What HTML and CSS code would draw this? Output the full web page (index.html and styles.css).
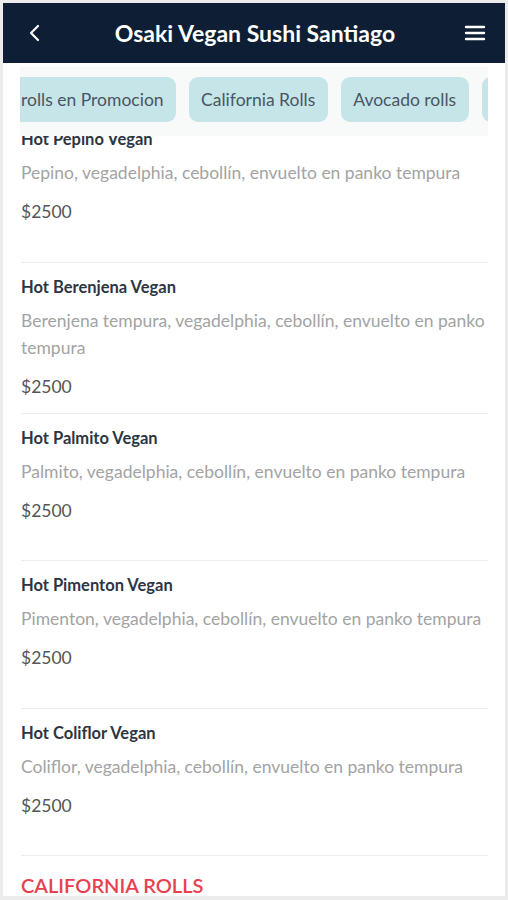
FILE: index.html
```html
<!DOCTYPE html>
<html lang="es">
<head>
  <meta charset="UTF-8" />
  <meta name="viewport" content="width=device-width, initial-scale=1" />
  <title>Osaki Vegan Sushi Santiago</title>
  <link rel="stylesheet" href="styles.css">
</head>

<body>
  <div class="app">
    <header class="topbar">
      <span class="topbar-btn">
        <svg width="20" height="20" viewBox="0 0 20 20"><path d="M13 3 L6 10 L13 17" fill="none" stroke="#fff" stroke-width="2.2" stroke-linecap="round" stroke-linejoin="round"/></svg>
      </span>
      <h1>Osaki Vegan Sushi Santiago</h1>
      <span class="topbar-btn">
        <svg width="22" height="18" viewBox="0 0 22 18"><path d="M2 3 H20 M2 9 H20 M2 15 H20" fill="none" stroke="#fff" stroke-width="2.4" stroke-linecap="round"/></svg>
      </span>
    </header>

    <main class="menu">
      <!-- barra de categorias (fija sobre la lista) -->
      <nav class="categories">
        <div class="chips">
          <span class="chip chip-cut">rolls en Promocion</span>
          <span class="chip">California Rolls</span>
          <span class="chip">Avocado rolls</span>
          <span class="chip chip-empty"></span>
        </div>
      </nav>

      <ul class="products">
        <li class="product">
          <h3>Hot Pepino Vegan</h3>
          <p class="desc">Pepino, vegadelphia, cebollín, envuelto en panko tempura</p>
          <p class="price">$2500</p>
        </li>
        <li class="product">
          <h3>Hot Berenjena Vegan</h3>
          <p class="desc">Berenjena tempura, vegadelphia, cebollín, envuelto en panko tempura</p>
          <p class="price">$2500</p>
        </li>
        <li class="product">
          <h3>Hot Palmito Vegan</h3>
          <p class="desc">Palmito, vegadelphia, cebollín, envuelto en panko tempura</p>
          <p class="price">$2500</p>
        </li>
        <li class="product">
          <h3>Hot Pimenton Vegan</h3>
          <p class="desc">Pimenton, vegadelphia, cebollín, envuelto en panko tempura</p>
          <p class="price">$2500</p>
        </li>
        <li class="product">
          <h3>Hot Coliflor Vegan</h3>
          <p class="desc">Coliflor, vegadelphia, cebollín, envuelto en panko tempura</p>
          <p class="price">$2500</p>
        </li>
      </ul>

      <h2 class="section-title">California Rolls</h2>
    </main>
  </div>
</body>
</html>
```

FILE: styles.css
```css
html, body {
  height: 100%;
}

body {
  margin: 0;
  background-color: #ececec;
  font-family: Lato, "Open Sans", sans-serif;
  padding: 3px 3px 4px 3px;
  box-sizing: border-box;
  overflow: hidden;
}

.app {
  background: #fff;
  height: 100%;
  overflow: hidden;
}

.topbar {
  height: 60px;
  background-color: #0e1f35;
  display: flex;
  align-items: center;
  justify-content: space-between;
  padding: 0 18px 0 20px;
}

.topbar h1 {
  margin: 0;
  color: #fff;
  font-size: 23px;
  font-weight: bold;
}

.topbar-btn {
  display: flex;
  width: 24px;
  justify-content: center;
}

.menu {
  position: relative;
  padding: 52px 17px 0 18px;
}

.categories {
  position: absolute;
  top: 4px;
  left: 17px;
  right: 17px;
  background: #f8f9f9;
  padding: 10px 0 14px 0;
  overflow: hidden;
  z-index: 10;
}

.chips {
  display: flex;
  gap: 13px;
  white-space: nowrap;
}

.chip {
  flex: none;
  height: 45px;
  line-height: 45px;
  padding: 0 12.5px;
  background-color: #c6e5e8;
  border-radius: 9px;
  color: #4a5565;
  font-size: 17.5px;
}

.chip-cut {
  padding-left: 1px;
  padding-right: 12px;
  border-radius: 0 9px 9px 0;
}

.chip-empty {
  width: 40px;
}

.products {
  list-style: none;
  margin: 0;
  padding: 0;
}

.product {
  box-sizing: border-box;
  min-height: 147.5px;
  padding: 14px 0 16px;
  border-bottom: 1px solid #ececec;
}

.product h3 {
  margin: 0;
  font-size: 16.5px;
  line-height: 20px;
  font-weight: bold;
  color: #2d3542;
}

.desc {
  margin: 10px 0 0;
  font-size: 17.5px;
  line-height: 27px;
  color: #a3a3a3;
}

.price {
  margin: 16px 0 0;
  font-size: 17.5px;
  line-height: 20px;
  color: #555;
}

.section-title {
  margin: 18px 0 0;
  font-size: 20px;
  line-height: 22px;
  font-weight: 600;
  text-transform: uppercase;
  color: #e8404f;
}
```
